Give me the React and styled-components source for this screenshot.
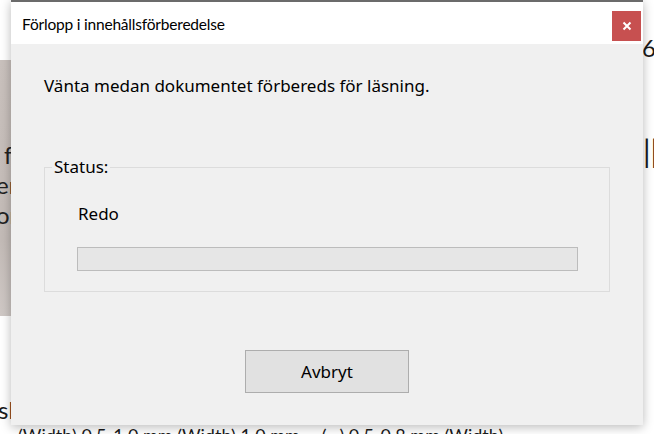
import styled, { createGlobalStyle } from 'styled-components';

const GlobalStyle = createGlobalStyle`
  html, body {
    margin: 0;
    padding: 0;
    background: #ffffff;
    overflow: hidden;
  }
  * {
    box-sizing: border-box;
  }
`;

const Screen = styled.div`
  position: relative;
  width: 654px;
  height: 434px;
  overflow: hidden;
  background: #ffffff;
  font-family: 'Noto Sans', 'Open Sans', sans-serif;
  color: #000;
`;

// document behind the dialog, only its edges show
const Backdrop = styled.div`
  position: absolute;
  inset: 0;
`;

const PictureEdge = styled.div`
  position: absolute;
  left: 0;
  top: 60px;
  width: 14px;
  height: 256px;
  background: linear-gradient(180deg, #c9c1bd 0%, #c3bbb7 70%, #cfc8c5 100%);
  font-family: 'Lato', sans-serif;
  font-size: 24px;
  line-height: 30px;
  color: #222;
  padding-top: 80px;
  white-space: nowrap;
`;

const PictureLine = styled.div`
  margin-left: ${({ $shift }) => $shift}px;
`;

const Fragment = styled.div`
  position: absolute;
  left: ${({ $x }) => $x}px;
  top: ${({ $y }) => $y}px;
  font-family: 'Lato', sans-serif;
  font-size: ${({ $size }) => $size || 22}px;
  line-height: 1;
  color: #1a1a1a;
  white-space: nowrap;
`;

const Dialog = styled.div`
  position: absolute;
  left: 11px;
  top: 0;
  width: 632px;
  height: 425px;
  display: flex;
  flex-direction: column;
  background: #f0f0f0;
  border-top: 2px solid #6b6b6b;
  box-shadow: 0 2px 10px rgba(0, 0, 0, 0.28);
`;

const TitleBar = styled.div`
  height: 42px;
  flex: none;
  display: flex;
  align-items: center;
  justify-content: space-between;
  background: #ffffff;
  padding: 0 2px 0 11px;
`;

const Title = styled.span`
  font-family: 'Lato', sans-serif;
  font-size: 15.5px;
  letter-spacing: -0.2px;
  color: #000;
  margin-top: 1px;
`;

const CloseButton = styled.button`
  width: 29px;
  height: 30px;
  margin-top: 9px;
  align-self: flex-start;
  border: none;
  background: #c75050;
  color: #fff;
  display: flex;
  align-items: center;
  justify-content: center;
  padding: 0;
`;

const Body = styled.div`
  flex: 1;
  display: flex;
  flex-direction: column;
  padding: 30px 33px 0 33px;
`;

const Message = styled.p`
  margin: 0;
  font-size: 17px;
  line-height: 24px;
`;

const GroupBox = styled.fieldset`
  margin: 60px 0 0 0;
  padding: 28px 31px 20px 32px;
  height: 134px;
  width: 566px;
  border: 1px solid #dcdcdc;
  min-width: 0;
`;

const Legend = styled.legend`
  font-size: 17px;
  padding: 0 2px;
  margin-left: -25px;
  line-height: 18px;
`;

const StatusText = styled.div`
  font-size: 17px;
  line-height: 20px;
  margin-left: 1px;
`;

const ProgressTrack = styled.div`
  margin-top: 23px;
  height: 24px;
  width: 501px;
  background: #e6e6e6;
  border: 1px solid #bcbcbc;
`;

const Footer = styled.div`
  display: flex;
  justify-content: center;
  padding-top: 58px;
`;

const CancelButton = styled.button`
  width: 164px;
  height: 43px;
  background: #e1e1e1;
  border: 1px solid #adadad;
  font-family: 'Noto Sans', 'Open Sans', sans-serif;
  font-size: 17px;
  color: #000;
`;

const CloseIcon = () => (
  <svg width="10" height="10" viewBox="0 0 10 10">
    <path d="M1.5 1.5 L8.5 8.5 M8.5 1.5 L1.5 8.5" stroke="#fff" strokeWidth="2" />
  </svg>
);

const App = () => (
  <>
    <GlobalStyle />
    <Screen>
      <Backdrop>
        <PictureEdge>
          <PictureLine $shift={4}>f</PictureLine>
          <PictureLine $shift={-4}>er</PictureLine>
          <PictureLine $shift={-4}>or</PictureLine>
        </PictureEdge>
        <Fragment $x={642} $y={36} $size={24}>6</Fragment>
        <Fragment $x={643} $y={136} $size={30}>||</Fragment>
        <Fragment $x={-2} $y={398} $size={24}>sl</Fragment>
        <Fragment $x={18} $y={426} $size={18}>(Width) 0.5-1.0 mm (Width) 1.0 mm ...  (...)  0.5-0.8 mm (Width)</Fragment>
      </Backdrop>
      <Dialog>
        <TitleBar>
          <Title>Förlopp i innehållsförberedelse</Title>
          <CloseButton aria-label="Stäng">
            <CloseIcon />
          </CloseButton>
        </TitleBar>
        <Body>
          <Message>Vänta medan dokumentet förbereds för läsning.</Message>
          <GroupBox>
            <Legend>Status:</Legend>
            <StatusText>Redo</StatusText>
            <ProgressTrack />
          </GroupBox>
          <Footer>
            <CancelButton>Avbryt</CancelButton>
          </Footer>
        </Body>
      </Dialog>
    </Screen>
  </>
);

export default App;
